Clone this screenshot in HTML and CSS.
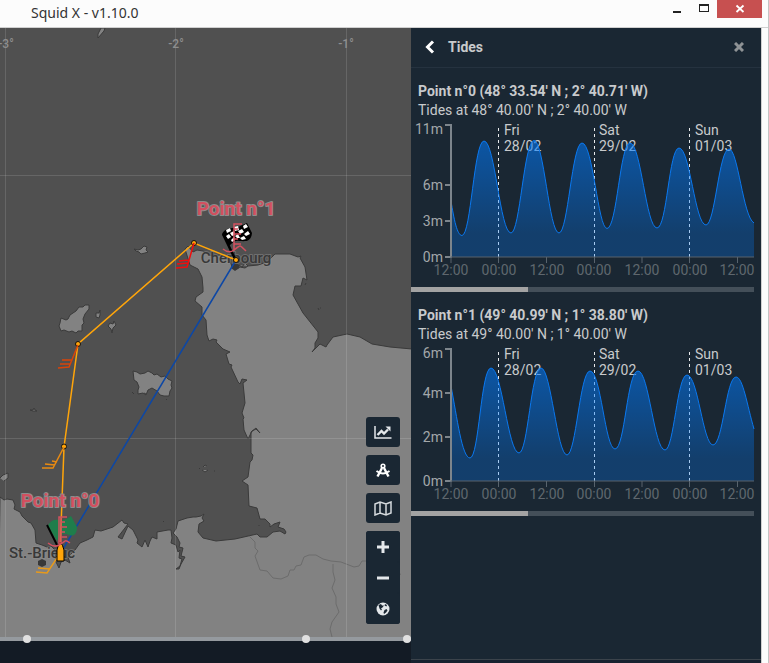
FILE: index.html
```html
<!DOCTYPE html>
<html lang="en">
<head>
    <meta charset="UTF-8">
    <meta name="viewport" content="width=device-width, initial-scale=1.0">
    <title>Squid X - v1.10.0</title>
    <link rel="stylesheet" href="styles.css">
</head>
<body>
    <header class="titlebar">
        <h1>Squid X - v1.10.0</h1>
        <div class="window-buttons">
            <button class="window-btn" aria-label="Minimize">
                <svg width="12" height="12" viewBox="0 0 12 12"><path d="M2 8h8v2H2z" fill="#222"/></svg>
            </button>
            <button class="window-btn" aria-label="Maximize">
                <svg width="12" height="12" viewBox="0 0 12 12"><path d="M1 1h10v8H1zM2 3v5h8V3z" fill="#222" fill-rule="evenodd"/></svg>
            </button>
            <button class="window-btn close" aria-label="Close">
                <svg width="12" height="12" viewBox="0 0 12 12"><path d="M2.500 2.500l7 6.500M9.500 2.500l-7 6.500" stroke="#fff" stroke-width="1.800"/></svg>
            </button>
        </div>
    </header>

    <div class="app">
        <main class="main">
            <div class="map-area">
                <svg class="map" viewBox="0 28 411 609" preserveAspectRatio="xMinYMin slice">
                    <!-- land -->
                    <g class="land">
                        <path d="M0 497L4 500 7 499 13 500 15 505 14 509 20 512 22 516 28 522 31 523 35 530 36 543 42 545 47 547 51 546 55 550 56 562 59 568 61 562 65 560 70 563 68 557 75 550 80 543 87 540 93 537 95 530 101 531 107 529 113 527 122 520 124 523 128 524 118 537 122 539 128 526 133 530 138 540 137 543 142 547 145 540 148 547 150 541 152 537 157 539 157 532 168 530 171 530 172 538 171 543 176 545 178 552 180 550 179 558 182 559 180 566 176 569 179 569 181 564 185 557 181 556 183 548 179 547 180 543 177 537 173 533 176 529 178 521 187 518 193 517 196 517 201 516 204 514 202 518 204 521 199 524 198 532 203 538 216 541 235 539 257 534 260 537 267 537 273 532 280 531 285 534 286 532 284 529 278 527 280 522 274 524 270 527 270 524 265 519 260 519 257 508 249 506 248 485 242 481 248 477 250 462 252 460 253 455 251 453 251 432 256 428 260 433 256 429 252 431 248 439 244 430 243 419 244 418 242 413 245 403 243 383 247 380 242 379 240 384 238 382 231 367 232 365 229 364 226 354 230 352 223 349 216 342 217 340 213 339 209 341 207 335 206 320 202 315 202 307 195 301 196 297 203 292 203 288 202 277 198 269 190 265 185 249 188 246 193 252 197 250 203 251 208 254 212 256 220 255 227 258 230 262 233 268 237 269 240 267 245 268 248 266 258 265 267 262 275 254 290 254 298 257 301 256 300 258 305 267 307 280 303 278 301 286 295 286 293 295 303 313 318 332 318 338 315 343 315 348 312 352 320 344 326 347 327 345 333 337 347 334 360 337 372 344 390 347 412 349 412 640-2 640z"/>
                        <path d="M61 318l5 2 2-1 2-4 6-4 3-4 4 0 2-2h4l0 4-4 5-2 5 1 4-2 2 0 6-4 0-2 2-4-2-3 1-5-2-3 1-2-5 1-3z"/>
                        <path d="M133 371l4 1 3 2 5-1 3-2 4 2 2 2 3-1 4 3 4-1 3 3 4 2-1 4 1 3-2 3-1 5-5 0-4-1-3-4-5-3-4 2-2 5-3-2-5 1 0-4 1-3-2-5-3-2z"/>
                        <path d="M110 323l3 1 1-3 2 4-3 3-1 5-1-4-3-3z"/>
                        <path d="M96 313l3 0 1-3 0 5-1 3-3-1z"/>
                        <path d="M134 249l4 1 3-1 3-3 3 1-1 3 2 2-3 1-4 1-2-2-3-1z"/>
                        <path d="M101 28l4 0-1 3-6 7 0-4z"/>
                        <path d="M30 410l3 0 1-2 1 2 2 1-4 0z"/>
                        <path d="M199 468l1 1M203 467l2-2 2 1M202 470l3 2 3-2M214 471l1 0M0 478l3-3 5-2 0 5-4 3M76 527l1 0M163 521l1 1M133 563M305 285l1-2M318 308l1 2M320 308l1 0M239 265l3 2 3-4 3 3M132 392l2 2M144 393l2 1M166 399l1 1M259 525l0 1"/>
                    </g>

                    <!-- inland borders -->
                    <g class="border-lines">
                        <path d="M249 536l6 6 0 6 3 3-3 5 5 14 7 1 6 7 8 1 7-3 2-6 4 0 2-4 5-1 3-8 5-2 7 0 7 4 8 2 10 1 13 5 5-1 3-5 5 0 4 4h17l4 3 4 8 5-2"/>
                        <path d="M333 564l0 8 2 8-3 8 4 9 0 7 3 8-7 10-2 7 2 8"/>
                    </g>

                    <path class="grid-line" d="M5.500 28V637M175.500 28V637M346.500 28V637M0 175.500H411M0 438.500H411"/>
                    <g class="grid-label">
                        <text x="6" y="48">-3°</text>
                        <text x="176" y="48">-2°</text>
                        <text x="346" y="48">-1°</text>
                    </g>

                    <g class="city">
                        <path d="M42 559l4 2v4l-4 2-4-2v-4zM235 262l4 3v3l-4 3-4-3v-3z"/>
                        <text x="42" y="558">St.-Brieuc</text>
                        <text x="236" y="263">Cherbourg</text>
                    </g>

                    <path d="M236 260L60 554" stroke="#0c47a6" stroke-width="1.500"/>

                    <!-- start and finish flags -->
                    <path d="M48 526C51 518 58 520 62 520 66 520 68 518 71 516L77 527C77 536 72 537 67 534 62 533 60 535 57 541z" fill="#1f7d4b"/>
                    <path d="M47 525L60 551" stroke="#000" stroke-width="2"/>
                    <g>
                        <path d="M222 234C227 225 235 230 240 226L247 223 252 233C251 243 244 241 239 241 234 240 232 244 229 246z" fill="#000"/>
                        <path d="M226 230l4-2 1 3-4 2zM234 227l4-1 1 4-4 1zM243 226l3-2 2 3-4 2zM230 233l4-2 1 4-3 1zM238 231l4-2 2 3-4 2zM226 236l3-2 2 3-3 2zM235 236l3-2 2 4-3 0zM244 234l4-3 2 3-4 2zM231 240l3-3 1 3-3 2zM240 238l4-2 2 3-4 1z" fill="#fff"/>
                        <path d="M223 234L235 259" stroke="#000" stroke-width="2.500"/>
                    </g>

                    <!-- route -->
                    <path d="M60 553L64 447 78 344 194 243 236 260" fill="none" stroke="#ffa50a" stroke-width="1.500"/>
                    <g class="waypoint">
                        <circle cx="64" cy="446.500" r="2.500"/>
                        <circle cx="78" cy="344" r="2.500"/>
                        <circle cx="194" cy="243" r="2.500"/>
                        <circle cx="236" cy="260" r="2.500"/>
                    </g>

                    <!-- wind barbs -->
                    <g fill="none" stroke-width="1.500">
                        <path d="M194 243l-7 24-11 1M188 263l-11 1M189 260l-10 1" stroke="#f00d0d"/>
                        <path d="M78 345l-9 22-11 1M70 364h-10M72 360h-10" stroke="#d94408"/>
                        <path d="M64 447l-11 21-11 0M55 465l-10-1M57 462l-5-1" stroke="#e88a12"/>
                        <path d="M59 555l-12 18-11-1M50 569l-12-1" stroke="#e89a1a"/>
                    </g>
                    <path d="M57 561v-11q1-5 3-8 3 3 4 8v11z" fill="#ffa50a" stroke="#000"/>

                    <!-- tide gauges -->
                    <g fill="none" stroke="#d2505f" stroke-width="1.500">
                        <path d="M59 544V517H67M61 517V544M61 522h4M61 527h6M61 532h4M61 537h6M48 543q6 5 11 2t6-4 5 2"/>
                        <path d="M234 251V224H242M234 229h4M234 234h7M234 239h4M234 244h7M223 249q6 5 11 1t6-4 6 5"/>
                    </g>
                    <g class="point-label">
                        <text x="60" y="507">Point n°0</text>
                        <text x="236" y="215">Point n°1</text>
                    </g>
                </svg>

                <div class="toolbar">
                    <button class="tool" aria-label="Charts">
                        <svg width="18" height="14" viewBox="0 0 18 14"><path d="M1 1V13H17.500" fill="none" stroke="#e4e8eb" stroke-width="1.500"/><path d="M3.500 10L7.500 6 10 8.500 14 4.500" fill="none" stroke="#e4e8eb" stroke-width="2.400"/><path d="M11.500 1.500H16.500V6.500z" fill="#e4e8eb"/></svg>
                    </button>
                    <button class="tool" aria-label="Measure">
                        <svg width="16" height="15" viewBox="0 0 16 15"><g fill="none" stroke="#fff"><circle cx="8" cy="3" r="1.800" stroke-width="1.600"/><path d="M7 5L2.500 13.500M9 5L13.500 13.500" stroke-width="2.400"/><path d="M1.500 8Q8 13 14.500 8" stroke-width="1.800"/></g></svg>
                    </button>
                    <button class="tool" aria-label="Map layers">
                        <svg width="18" height="15" viewBox="0 0 18 15"><path d="M1 3L6 1 12 3 17 1V12L12 14 6 12 1 14zM6 1V12M12 3V14" fill="none" stroke="#d5dade" stroke-width="1.500"/></svg>
                    </button>
                    <div class="tool-group">
                        <button class="tool" aria-label="Zoom in">
                            <svg width="12" height="12" viewBox="0 0 12 12"><path d="M4.500 0h3v4.500H12v3H7.500V12h-3V7.500H0v-3h4.500z" fill="#e4e8eb"/></svg>
                        </button>
                        <button class="tool" aria-label="Zoom out">
                            <svg width="12" height="12" viewBox="0 0 12 12"><path d="M0 4.500h12v3H0z" fill="#e4e8eb"/></svg>
                        </button>
                        <button class="tool" aria-label="World view">
                            <svg width="14" height="14" viewBox="0 0 14 14"><circle cx="7" cy="7" r="6.500" fill="#e4e8eb"/><path d="M2.500 3L5 2 6 3.500 8 3.500 6.500 5.500 5 6.500 6 7.500 5 8.500 3.500 6.500zM9 2L11 3 10.500 4.500 8.500 3.500zM8.500 8L10.500 7 11.500 8.500 10 10.500 8 12 7.500 10.500z" fill="#1a2733"/></svg>
                        </button>
                    </div>
                </div>
            </div>
            <div class="timeline">
                <input type="range" min="0" max="1000" value="57" aria-label="Start">
                <input type="range" min="0" max="1000" value="749" aria-label="Current time">
                <input type="range" min="0" max="1000" value="1000" aria-label="End">
            </div>
            <div class="main-footer"></div>
        </main>

        <aside class="panel">
            <div class="panel-header">
                <button class="icon-btn" aria-label="Back">
                    <svg width="10" height="14" viewBox="0 0 10 14"><path d="M8 1.500L2.500 7 8 12.500" fill="none" stroke="#fff" stroke-width="3"/></svg>
                </button>
                <h2>Tides</h2>
                <button class="icon-btn" aria-label="Close panel">
                    <svg width="10" height="10" viewBox="0 0 10 10"><path d="M1 1l8 8M9 1l-8 8" stroke="#8e9295" stroke-width="3"/></svg>
                </button>
            </div>
            <div class="panel-body">
                <section class="tide">
                    <h3>Point n°0 (48° 33.54' N ; 2° 40.71' W)</h3>
                    <p>Tides at 48° 40.00' N ; 2° 40.00' W</p>
                    <svg class="chart" viewBox="0 0 343 167">
                        <defs>
                            <linearGradient id="water" x1="0" y1="0" x2="0" y2="1">
                                <stop offset="0" stop-color="#007bff" stop-opacity="0.560"/>
                                <stop offset="0.800" stop-color="#007bff" stop-opacity="0.280"/>
                                <stop offset="1" stop-color="#007bff" stop-opacity="0.280"/>
                            </linearGradient>
                        </defs>
                        <g class="day">
                            <path d="M87.500 8V137M183.500 8V137M278.500 8V137"/>
                            <text x="93" y="15">Fri</text><text x="93" y="31">28/02</text>
                            <text x="188" y="15">Sat</text><text x="188" y="31">29/02</text>
                            <text x="284" y="15">Sun</text><text x="284" y="31">01/03</text>
                        </g>
                        <path class="area" d="M40 81C43 99 46 115.500 51 115.500C60 115.500 63 21 73 21C84 21 89 113 100 113C109 113 113 20.500 123 20.500C133 20.500 138 113 148 113C157 113 161 23 171 23C182 23 187 108.500 196 108.500C206 108.500 209 23 219 23C230 23 235 108 246 108C256 108 258 28 268 28C279 28 284 105 295 105C304 105 308 29 318 29C327 29 332 97 343 103V137H40z"/>
                        <path class="curve" d="M40 81C43 99 46 115.500 51 115.500C60 115.500 63 21 73 21C84 21 89 113 100 113C109 113 113 20.500 123 20.500C133 20.500 138 113 148 113C157 113 161 23 171 23C182 23 187 108.500 196 108.500C206 108.500 209 23 219 23C230 23 235 108 246 108C256 108 258 28 268 28C279 28 284 105 295 105C304 105 308 29 318 29C327 29 332 97 343 103"/>
                        <path class="axis-y" d="M34 5H40V137H34M34 65H40M34 101H40"/>
                        <path class="axis-x" d="M40 137H343M40 137v6M87.500 137v6M135.500 137v6M183.500 137v6M231 137v6M278.500 137v6M326.500 137v6"/>
                        <g class="label-y">
                            <text x="32" y="14">11m</text><text x="32" y="70">6m</text><text x="32" y="106">3m</text><text x="32" y="142">0m</text>
                        </g>
                        <g class="label-x">
                            <text x="40" y="155">12:00</text><text x="88" y="155">00:00</text><text x="136" y="155">12:00</text><text x="183" y="155">00:00</text><text x="231" y="155">12:00</text><text x="279" y="155">00:00</text><text x="326" y="155">12:00</text>
                        </g>
                    </svg>
                    <div class="scrollbar"><div class="scroll-thumb"></div></div>
                </section>

                <section class="tide">
                    <h3>Point n°1 (49° 40.99' N ; 1° 38.80' W)</h3>
                    <p>Tides at 49° 40.00' N ; 1° 40.00' W</p>
                    <svg class="chart" viewBox="0 0 343 167">
                        <g class="day">
                            <path d="M87.500 8V137M183.500 8V137M278.500 8V137"/>
                            <text x="93" y="15">Fri</text><text x="93" y="31">28/02</text>
                            <text x="188" y="15">Sat</text><text x="188" y="31">29/02</text>
                            <text x="284" y="15">Sun</text><text x="284" y="31">01/03</text>
                        </g>
                        <path class="area" d="M40 42C46 73 51 114 59 114C68 114 70 24 80 24C91 24 97 109 108 109C117 109 120 24 130 24C140 24 146 111 156 111C165 111 169 27 179 27C190 27 194 105 204 105C214 105 216 27 227 27C238 27 243 106 254 106C263 106 266 31 276 31C287 31 292 101 302 101C312 101 315 33 325 33C332 33 336 61 343 85V137H40z"/>
                        <path class="curve" d="M40 42C46 73 51 114 59 114C68 114 70 24 80 24C91 24 97 109 108 109C117 109 120 24 130 24C140 24 146 111 156 111C165 111 169 27 179 27C190 27 194 105 204 105C214 105 216 27 227 27C238 27 243 106 254 106C263 106 266 31 276 31C287 31 292 101 302 101C312 101 315 33 325 33C332 33 336 61 343 85"/>
                        <path class="axis-y" d="M34 5H40V137H34M34 49H40M34 93H40"/>
                        <path class="axis-x" d="M40 137H343M40 137v6M87.500 137v6M135.500 137v6M183.500 137v6M231 137v6M278.500 137v6M326.500 137v6"/>
                        <g class="label-y">
                            <text x="32" y="14">6m</text><text x="32" y="54">4m</text><text x="32" y="98">2m</text><text x="32" y="142">0m</text>
                        </g>
                        <g class="label-x">
                            <text x="40" y="155">12:00</text><text x="88" y="155">00:00</text><text x="136" y="155">12:00</text><text x="183" y="155">00:00</text><text x="231" y="155">12:00</text><text x="279" y="155">00:00</text><text x="326" y="155">12:00</text>
                        </g>
                    </svg>
                    <div class="scrollbar"><div class="scroll-thumb"></div></div>
                </section>
            </div>
            <div class="panel-footer"></div>
        </aside>
    </div>
</body>
</html>
```
FILE: styles.css
```css
:root {
    --panel: #1a2733;
    --dark: #131b25;
    --sea: #505050;
    --land: #828282;
    --text: #c8cacc;
}

* {
    margin: 0;
    padding: 0;
    box-sizing: border-box;
}

body {
    display: flex;
    flex-direction: column;
    min-height: 100vh;
    background-color: #fcfcfc;
    border-right: 1px solid #c4c4c4;
    font-family: Roboto, Arial, sans-serif;
    font-size: 14px;
    color: var(--text);
}

button {
    display: flex;
    align-items: center;
    justify-content: center;
    border: none;
    background: none;
    cursor: pointer;
}

/* window title bar */
.titlebar {
    display: flex;
    justify-content: space-between;
    height: 28px;
    padding: 0 6px 0 31px;
    border-bottom: 1px solid #d0d0d0;
}

.titlebar h1 {
    font-family: "Noto Sans", sans-serif;
    font-size: 14px;
    font-weight: 400;
    line-height: 26px;
    color: #333;
}

.window-buttons {
    display: flex;
}

.window-btn {
    width: 27px;
    height: 18px;
}

.window-btn.close {
    width: 45px;
    background-color: #c75050;
}

.app {
    flex: 1;
    display: flex;
    margin-right: 6px;
    border-right: 1px solid #d0d0d0;
}

/* map */
.main {
    flex: 1;
    min-width: 0;
    display: flex;
    flex-direction: column;
}

.map-area {
    flex: 1;
    display: grid;
    min-height: 0;
    overflow: hidden;
    background-color: var(--sea);
}

.map {
    grid-area: 1 / 1;
    width: 100%;
    height: 100%;
}

.land path {
    fill: var(--land);
    stroke: #3a3a3a;
    stroke-width: 1;
}

.border-lines path {
    fill: none;
    stroke: #6c6c6c;
}

.grid-line {
    stroke: #fff;
    stroke-opacity: 0.13;
}

.map text {
    text-anchor: middle;
}

.grid-label {
    font-size: 12px;
    font-weight: 500;
    fill: #8e8e8e;
}

.city {
    font-size: 15px;
    font-weight: 500;
    fill: #383838;
}

.city text {
    stroke: #8f8f8f;
    stroke-width: 2px;
    stroke-opacity: 0.5;
    stroke-linejoin: round;
    paint-order: stroke;
}

.waypoint {
    fill: #ffa50a;
    stroke: #111;
}

.point-label {
    font-size: 19px;
    font-weight: 700;
    fill: #d2505f;
    stroke: #8c8c8c;
    stroke-width: 2px;
    stroke-linejoin: round;
    paint-order: stroke;
}

.toolbar {
    grid-area: 1 / 1;
    place-self: end;
    display: flex;
    flex-direction: column;
    gap: 8px;
    padding: 0 11px 13px 0;
}

.tool {
    width: 34px;
    height: 30px;
    border-radius: 3px;
    background-color: var(--panel);
}

.tool-group {
    border-radius: 3px;
    background-color: var(--panel);
}

.tool-group .tool {
    height: 31px;
}

/* the handles stick out above and below the bar */
.timeline {
    position: relative;
    z-index: 1;
    display: grid;
    height: 4px;
    background-color: #959a9f;
}

.timeline input {
    grid-area: 1 / 1;
    width: 100%;
    height: 8px;
    margin-top: -2px;
    appearance: none;
    background: none;
    pointer-events: none;
}

.timeline input::-webkit-slider-thumb {
    appearance: none;
    width: 8px;
    height: 8px;
    border-radius: 50%;
    background-color: #e0e0e0;
    pointer-events: auto;
}

.main-footer {
    height: 22px;
    background-color: var(--dark);
}

/* tides panel */
.panel {
    width: 350px;
    display: flex;
    flex-direction: column;
    background-color: var(--panel);
}

.panel-header {
    display: flex;
    align-items: center;
    gap: 13px;
    height: 40px;
    padding: 0 17px 2px 14px;
    border-bottom: 1px solid #25323f;
}

.panel-header h2 {
    flex: 1;
    font-size: 14px;
    font-weight: 700;
}

.panel-body {
    flex: 1;
    padding: 14px 7px 0 0;
}

.tide {
    margin-bottom: 14px;
}

.tide h3,
.tide p {
    padding-left: 7px;
    font-size: 14px;
    line-height: 19px;
}

.chart {
    display: block;
    width: 100%;
    overflow: visible;
}

.chart text {
    font-size: 14px;
}

.day text {
    fill: var(--text);
}

.day path {
    stroke: #e8eaec;
    stroke-dasharray: 3 3;
}

.area {
    fill: url(#water);
}

.curve {
    fill: none;
    stroke: #0a78f0;
}

.axis-y {
    fill: none;
    stroke: #7d858c;
    stroke-width: 2;
}

.axis-x {
    fill: none;
    stroke: #58636d;
}

.label-y {
    fill: #a3a7aa;
    text-anchor: end;
}

.label-x {
    fill: #5f676e;
    text-anchor: middle;
}

.scrollbar {
    height: 5px;
    background-color: #444f59;
}

.scroll-thumb {
    width: 34%;
    height: 5px;
    background-color: #a3a3a3;
}

.panel-footer {
    height: 4px;
    border-top: 1px solid #3b434b;
    background-color: #172230;
}
```
